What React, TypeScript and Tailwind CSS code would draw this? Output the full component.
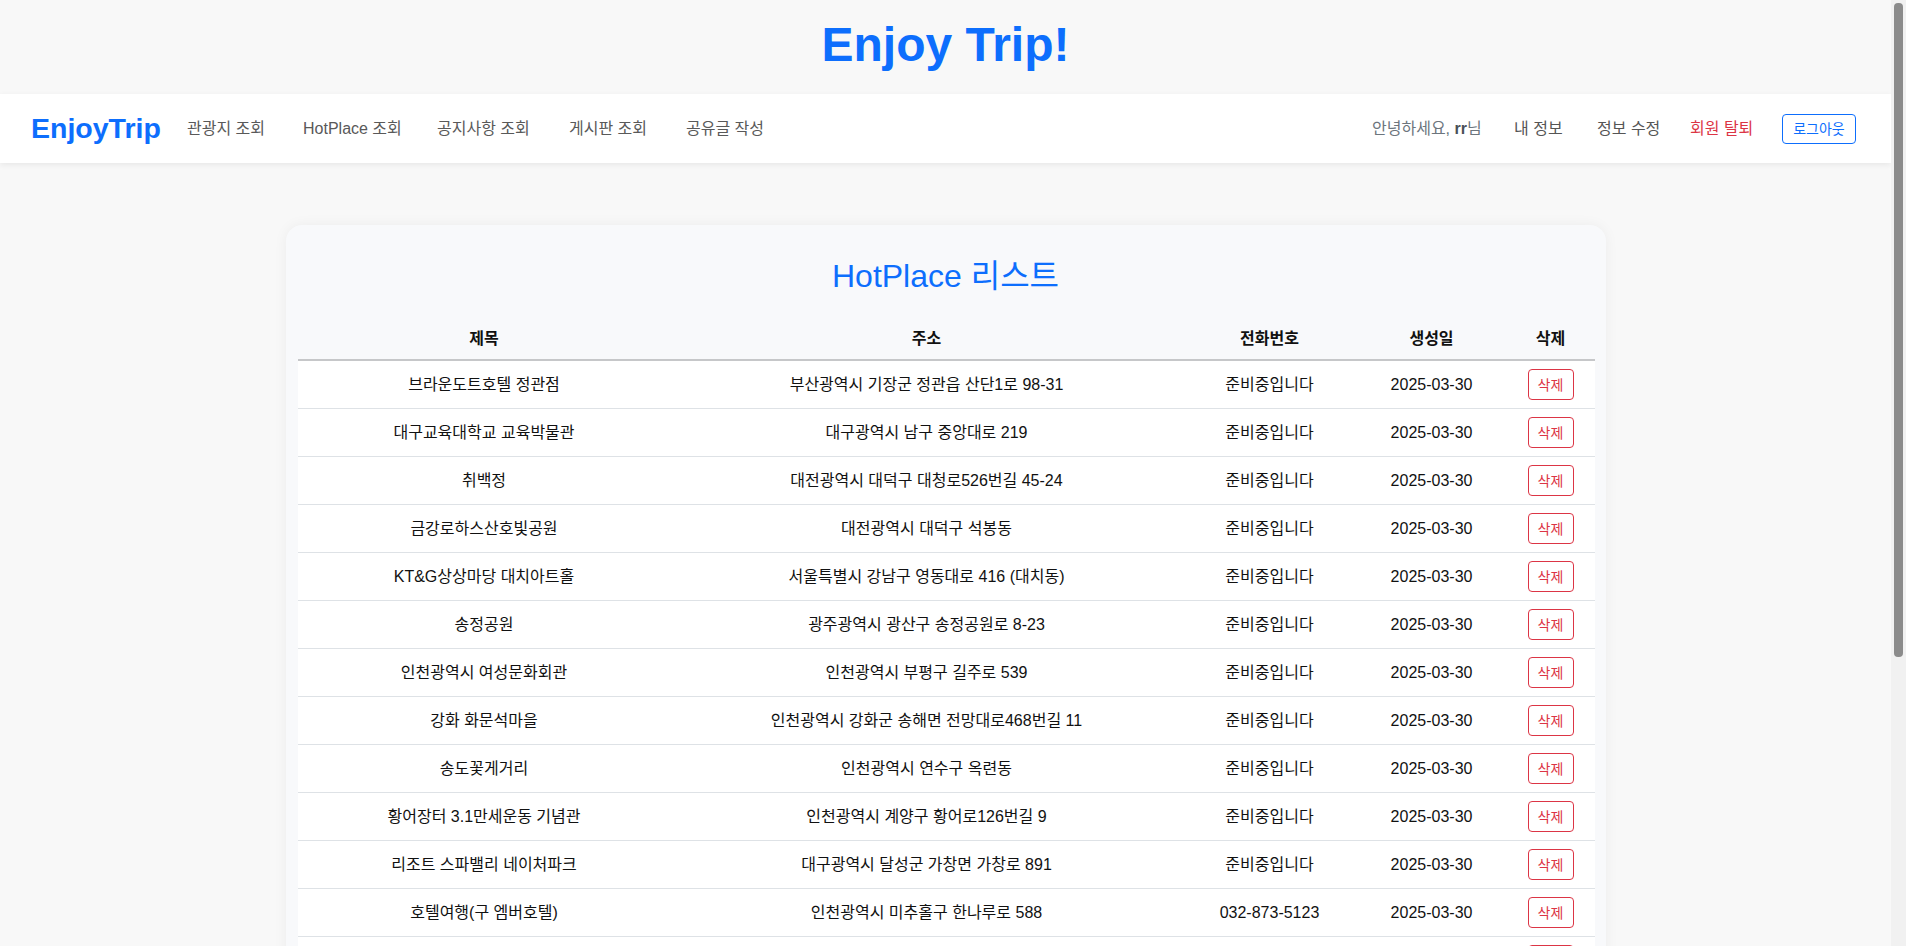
import React from "react";

type Row = { title: string; addr: string; tel: string; date: string };

const rows: Row[] = [
  { title: "브라운도트호텔 정관점", addr: "부산광역시 기장군 정관읍 산단1로 98-31", tel: "준비중입니다", date: "2025-03-30" },
  { title: "대구교육대학교 교육박물관", addr: "대구광역시 남구 중앙대로 219", tel: "준비중입니다", date: "2025-03-30" },
  { title: "취백정", addr: "대전광역시 대덕구 대청로526번길 45-24", tel: "준비중입니다", date: "2025-03-30" },
  { title: "금강로하스산호빛공원", addr: "대전광역시 대덕구 석봉동", tel: "준비중입니다", date: "2025-03-30" },
  { title: "KT&G상상마당 대치아트홀", addr: "서울특별시 강남구 영동대로 416 (대치동)", tel: "준비중입니다", date: "2025-03-30" },
  { title: "송정공원", addr: "광주광역시 광산구 송정공원로 8-23", tel: "준비중입니다", date: "2025-03-30" },
  { title: "인천광역시 여성문화회관", addr: "인천광역시 부평구 길주로 539", tel: "준비중입니다", date: "2025-03-30" },
  { title: "강화 화문석마을", addr: "인천광역시 강화군 송해면 전망대로468번길 11", tel: "준비중입니다", date: "2025-03-30" },
  { title: "송도꽃게거리", addr: "인천광역시 연수구 옥련동", tel: "준비중입니다", date: "2025-03-30" },
  { title: "황어장터 3.1만세운동 기념관", addr: "인천광역시 계양구 황어로126번길 9", tel: "준비중입니다", date: "2025-03-30" },
  { title: "리조트 스파밸리 네이처파크", addr: "대구광역시 달성군 가창면 가창로 891", tel: "준비중입니다", date: "2025-03-30" },
  { title: "호텔여행(구 엠버호텔)", addr: "인천광역시 미추홀구 한나루로 588", tel: "032-873-5123", date: "2025-03-30" },
  { title: "월미공원", addr: "인천광역시 중구 월미로 131-22", tel: "준비중입니다", date: "2025-03-30" },
  { title: "소래포구", addr: "인천광역시 남동구 소래역로 12", tel: "준비중입니다", date: "2025-03-30" },
  { title: "대전시민천문대", addr: "대전광역시 유성구 과학로 213-48", tel: "준비중입니다", date: "2025-03-30" },
];

export default function App() {
  return (
    <div className="h-screen flex bg-[#f8f8f8] font-['Liberation_Sans','Noto_Sans_CJK_KR',sans-serif] text-[#111]">
      <div className="flex-1 min-w-0 overflow-hidden">
        <header className="h-[94px] flex items-center justify-center pb-1">
          <h1 className="text-[48px] font-bold leading-none text-[#0d6efd]">Enjoy Trip!</h1>
        </header>

        <nav className="h-[69px] bg-white shadow-[0_2px_6px_rgba(0,0,0,0.07)] flex items-center pl-[31px] pr-[35px] relative">
          <span className="w-[156px] text-[28.5px] font-bold text-[#0d6efd] leading-none">EnjoyTrip</span>
          <div className="flex items-center text-base text-[#595959] whitespace-nowrap">
            <span className="w-[116px]">관광지 조회</span>
            <span className="w-[134px]">HotPlace 조회</span>
            <span className="w-[132px]">공지사항 조회</span>
            <span className="w-[117px]">게시판 조회</span>
            <span>공유글 작성</span>
          </div>
          <div className="ml-auto flex items-center text-base whitespace-nowrap">
            <span className="w-[142px] text-[#6c757d]">
              안녕하세요, <b className="font-bold text-[#495057]">rr</b>님
            </span>
            <span className="w-[83px] text-[#555]">내 정보</span>
            <span className="w-[93px] text-[#555]">정보 수정</span>
            <span className="w-[92px] text-[#dc3545]">회원 탈퇴</span>
            <button className="w-[74px] h-[30px] text-sm leading-none text-[#0d6efd] border border-[#0d6efd] rounded-[4px] bg-white">
              로그아웃
            </button>
          </div>
        </nav>

        <main className="pt-[62px] pb-16">
          <div className="mx-auto w-[1320px] max-w-full bg-[#f8f9fb] rounded-2xl shadow-[0_0_14px_rgba(0,0,0,0.05)] px-3 pt-8 pb-6">
            <h2 className="text-[32px] leading-[1.2] text-center text-[#0d6efd] mb-6">HotPlace 리스트</h2>
            <table className="w-full table-fixed border-collapse">
              <colgroup>
                <col className="w-[373px]" />
                <col className="w-[512px]" />
                <col className="w-[174px]" />
                <col className="w-[150px]" />
                <col className="w-[88px]" />
              </colgroup>
              <thead>
                <tr className="border-b-2 border-[#c6c7c9]">
                  <th className="h-10 py-2 leading-6 font-bold text-center">제목</th>
                  <th className="h-10 py-2 leading-6 font-bold text-center">주소</th>
                  <th className="h-10 py-2 leading-6 font-bold text-center">전화번호</th>
                  <th className="h-10 py-2 leading-6 font-bold text-center">생성일</th>
                  <th className="h-10 py-2 leading-6 font-bold text-center">삭제</th>
                </tr>
              </thead>
              <tbody>
                {rows.map((r, i) => (
                  <tr key={i} className="bg-white border-b border-[#dee2e6]">
                    <td className="h-[47px] py-2 leading-6 text-center align-middle">{r.title}</td>
                    <td className="h-[47px] py-2 leading-6 text-center align-middle">{r.addr}</td>
                    <td className="h-[47px] py-2 leading-6 text-center align-middle">{r.tel}</td>
                    <td className="h-[47px] py-2 leading-6 text-center align-middle">{r.date}</td>
                    <td className="h-[47px] py-2 text-center align-middle">
                      <button className="w-[46px] h-[31px] text-sm leading-none text-[#dc3545] border border-[#dc3545] rounded-[4px] bg-white">
                        삭제
                      </button>
                    </td>
                  </tr>
                ))}
              </tbody>
            </table>
          </div>
        </main>
      </div>

      <div className="w-[15px] shrink-0 bg-[#f1f1f1] px-[3px] pt-[3px]">
        <div className="h-[654px] rounded-[4px] bg-[#8b8b8b]" />
      </div>
    </div>
  );
}
